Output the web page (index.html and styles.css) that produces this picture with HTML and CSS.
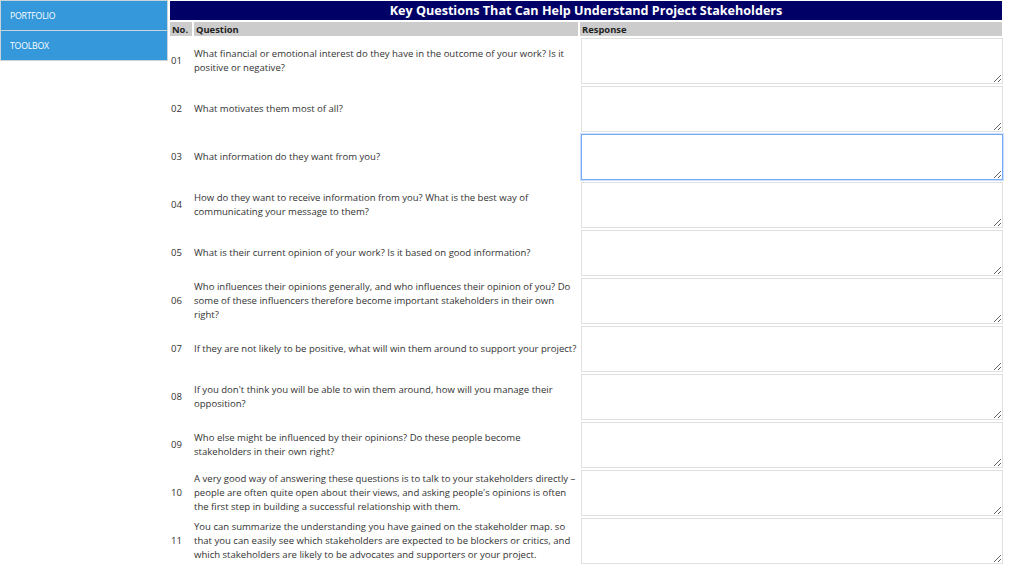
FILE: index.html
```html
<!DOCTYPE html>
<html>
<head>
<meta charset="utf-8">
<link rel="stylesheet" href="styles.css">
</head>
<body>
<div class="page">
  <nav class="sidebar">
    <a class="nav-item" href="#">PORTFOLIO</a>
    <a class="nav-item" href="#">TOOLBOX</a>
  </nav>
  <main class="main">
    <table class="qtable">
      <colgroup>
        <col class="col-no">
        <col class="col-q">
        <col class="col-r">
      </colgroup>
      <thead>
        <tr><th colspan="3" class="title">Key Questions That Can Help Understand Project Stakeholders</th></tr>
        <tr class="head">
          <th>No.</th>
          <th>Question</th>
          <th>Response</th>
        </tr>
      </thead>
      <tbody>
        <tr><td class="c-no">01</td><td class="c-q">What financial or emotional interest do they have in the outcome of your work? Is it positive or negative?</td><td class="c-r"><textarea></textarea></td></tr>
        <tr><td class="c-no">02</td><td class="c-q">What motivates them most of all?</td><td class="c-r"><textarea></textarea></td></tr>
        <tr><td class="c-no">03</td><td class="c-q">What information do they want from you?</td><td class="c-r"><textarea class="focused"></textarea></td></tr>
        <tr><td class="c-no">04</td><td class="c-q">How do they want to receive information from you? What is the best way of communicating your message to them?</td><td class="c-r"><textarea></textarea></td></tr>
        <tr><td class="c-no">05</td><td class="c-q">What is their current opinion of your work? Is it based on good information?</td><td class="c-r"><textarea></textarea></td></tr>
        <tr><td class="c-no">06</td><td class="c-q">Who influences their opinions generally, and who influences their opinion of you? Do some of these influencers therefore become important stakeholders in their own right?</td><td class="c-r"><textarea></textarea></td></tr>
        <tr><td class="c-no">07</td><td class="c-q">If they are not likely to be positive, what will win them around to support your project?</td><td class="c-r"><textarea></textarea></td></tr>
        <tr><td class="c-no">08</td><td class="c-q">If you don't think you will be able to win them around, how will you manage their opposition?</td><td class="c-r"><textarea></textarea></td></tr>
        <tr><td class="c-no">09</td><td class="c-q">Who else might be influenced by their opinions? Do these people become stakeholders in their own right?</td><td class="c-r"><textarea></textarea></td></tr>
        <tr><td class="c-no">10</td><td class="c-q">A very good way of answering these questions is to talk to your stakeholders directly – people are often quite open about their views, and asking people's opinions is often the first step in building a successful relationship with them.</td><td class="c-r"><textarea></textarea></td></tr>
        <tr><td class="c-no">11</td><td class="c-q">You can summarize the understanding you have gained on the stakeholder map. so that you can easily see which stakeholders are expected to be blockers or critics, and which stakeholders are likely to be advocates and supporters or your project.</td><td class="c-r"><textarea></textarea></td></tr>
      </tbody>
    </table>
  </main>
</div>
</body>
</html>
```

FILE: styles.css
```css
html, body {
  margin: 0;
  padding: 0;
  background: #ffffff;
}
body {
  font-family: "Open Sans", "Noto Sans", sans-serif;
  color: #333333;
}
.page {
  display: flex;
  align-items: flex-start;
}
.sidebar {
  width: 168px;
  flex: none;
  display: flex;
  flex-direction: column;
  border: 1px solid #c9d3dc;
  box-sizing: border-box;
  background: #c9d3dc;
  gap: 1px;
}
.nav-item {
  display: flex;
  align-items: center;
  height: 29px;
  padding-left: 9px;
  background: #3498db;
  color: #ffffff;
  font-size: 8.7px;
  text-decoration: none;
  letter-spacing: -0.2px;
}
.main {
  flex: 1;
  margin-top: -1px;
}
.qtable {
  width: 836px;
  border-collapse: separate;
  border-spacing: 2px;
  table-layout: fixed;
}
.col-no { width: 22px; }
.col-q { width: 384px; }
.col-r { width: 422px; }
.qtable th, .qtable td {
  padding: 0;
}
.title {
  background: #000066;
  color: #ffffff;
  font-size: 12.6px;
  font-weight: 700;
  height: 19px;
  text-align: center;
}
.head th {
  background: #cccccc;
  color: #222222;
  font-size: 9.4px;
  font-weight: 700;
  height: 14px;
  text-align: left;
  padding-left: 2px;
}
.qtable td {
  font-size: 9.55px;
  line-height: 14px;
  vertical-align: middle;
}
.qtable td.c-no {
  padding-left: 1px;
}
.qtable td.c-r {
  height: 46px;
  padding-left: 1px;
}
textarea {
  display: block;
  box-sizing: border-box;
  width: 422px;
  height: 46px;
  margin: 0;
  border: 1px solid #e0e0e0;
  background: #ffffff;
  resize: vertical;
  outline: none;
}
textarea.focused {
  border: 1px solid #77aaf5;
  box-shadow: 0 0 0 1px #cfe0fb;
}
```
